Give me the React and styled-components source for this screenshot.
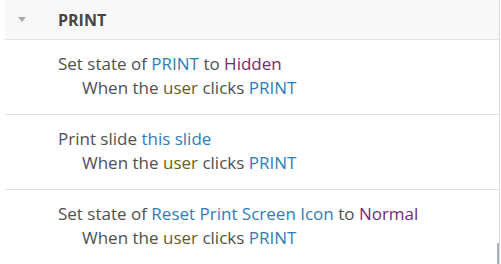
import React from "react";
import styled, { createGlobalStyle } from "styled-components";

const Global = createGlobalStyle`
  html, body { margin: 0; padding: 0; background: #ffffff; }
  body { font-family: "Open Sans", "Noto Sans", sans-serif; }
`;

const Panel = styled.div`
  width: 500px;
  height: 264px;
  border-right: 1px solid #dcdcdc;
  box-sizing: border-box;
  position: relative;
  overflow: hidden;
  background: #fff;
`;

const Header = styled.div`
  height: 40px;
  box-sizing: border-box;
  background: #f8f8f8;
  border-bottom: 1px solid #e2e2e2;
  margin-left: 5px;
  display: flex;
  align-items: center;
  padding-left: 13px;
`;

const Caret = styled.span`
  width: 0;
  height: 0;
  border-left: 4px solid transparent;
  border-right: 4px solid transparent;
  border-top: 5px solid #a9a9a9;
  margin-right: 32px;
`;

const Title = styled.span`
  font-weight: 700;
  font-size: 16px;
  color: #454545;
`;

const Rule = styled.div`
  margin-left: 5px;
  padding: 12px 0 14px 53px;
  border-bottom: ${(p) => (p.$last ? "none" : "1px solid #e2e2e2")};
  font-size: 17px;
  line-height: 24px;
  color: #505050;
`;

const Line = styled.div`
  padding-left: ${(p) => (p.$indent ? "24px" : "0")};
  white-space: nowrap;
`;

const Obj = styled.span`
  color: #2f7db8;
`;
const Val = styled.span`
  color: #762a76;
`;
const User = styled.span`
  color: #6b5c1a;
`;

const Thumb = styled.div`
  position: absolute;
  right: -1px;
  bottom: 0;
  width: 3px;
  height: 21px;
  background: #a8b0b8;
`;

function Trigger() {
  return (
    <Line $indent>
      When the <User>user</User> clicks <Obj>PRINT</Obj>
    </Line>
  );
}

export default function App() {
  return (
    <>
      <Global />
      <Panel>
        <Header>
          <Caret />
          <Title>PRINT</Title>
        </Header>
        <Rule>
          <Line>
            Set state of <Obj>PRINT</Obj> to <Val>Hidden</Val>
          </Line>
          <Trigger />
        </Rule>
        <Rule>
          <Line>
            Print slide <Obj>this slide</Obj>
          </Line>
          <Trigger />
        </Rule>
        <Rule $last>
          <Line>
            Set state of <Obj>Reset Print Screen Icon</Obj> to <Val>Normal</Val>
          </Line>
          <Trigger />
        </Rule>
        <Thumb />
      </Panel>
    </>
  );
}
